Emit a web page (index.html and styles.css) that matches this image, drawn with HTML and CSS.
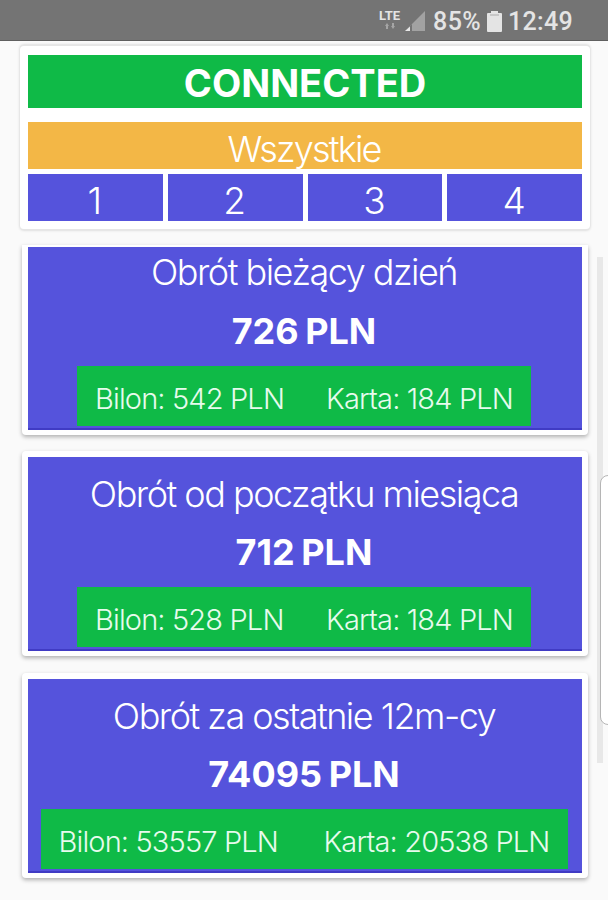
FILE: index.html
```html
<!DOCTYPE html>
<html lang="pl">
<head>
  <meta charset="UTF-8" />
  <meta name="viewport" content="width=device-width, initial-scale=1" />
  <title>Obrót</title>
  <link rel="stylesheet" href="styles.css">
</head>
<body>
  <header class="status-bar">
    <div class="lte">
      <span>LTE</span>
      <svg width="12" height="7" viewBox="0 0 12 7"><path d="M3 0 5 3H4V6H2V3H1zM9 6 7 3H8V0H10V3H11z" fill="#a5a5a5"/></svg>
    </div>
    <svg class="signal" width="21" height="20" viewBox="0 0 21 20"><path d="M20 0V20H0z" fill="#a2a2a2"/><path d="M0 20 7 13V20z" fill="#747474"/><path d="M0 20 5 15.5V20z" fill="#e8e8e8"/></svg>
    <span class="percent">85%</span>
    <svg class="battery" width="15" height="21" viewBox="0 0 15 21"><path d="M4 0H11V2H14Q15 2 15 3V20Q15 21 14 21H1Q0 21 0 20V3Q0 2 1 2H4z" fill="#e4e4e4"/><path d="M3 4H12" stroke="#aaa" stroke-width="1"/></svg>
    <span class="clock">12:49</span>
  </header>

  <main class="content">
    <section class="card machines">
      <div class="state">CONNECTED</div>
      <div class="all">Wszystkie</div>
      <div class="numbers">
        <div class="number">1</div>
        <div class="number">2</div>
        <div class="number">3</div>
        <div class="number">4</div>
      </div>
    </section>

    <section class="card turnover today">
      <div class="panel">
        <h2 class="label">Obrót bieżący dzień</h2>
        <p class="total">726 PLN</p>
        <div class="split"><span>Bilon: 542 PLN</span><span>Karta: 184 PLN</span></div>
      </div>
    </section>

    <section class="card turnover month">
      <div class="panel">
        <h2 class="label">Obrót od początku miesiąca</h2>
        <p class="total">712 PLN</p>
        <div class="split"><span>Bilon: 528 PLN</span><span>Karta: 184 PLN</span></div>
      </div>
    </section>

    <section class="card turnover year">
      <div class="panel">
        <h2 class="label">Obrót za ostatnie 12m-cy</h2>
        <p class="total">74095 PLN</p>
        <div class="split"><span>Bilon: 53557 PLN</span><span>Karta: 20538 PLN</span></div>
      </div>
    </section>
  </main>

  <div class="scrollbar"></div>
  <div class="edge-handle"></div>
</body>
</html>
```

FILE: styles.css
```css
* { box-sizing: border-box; }
body { position: relative; width: 608px; height: 900px; margin: 0; overflow: hidden; background: #fafafa; color: #fff; font-family: Inter, "Liberation Sans", sans-serif; font-weight: 300; }
h2, p { margin: 0; }

.status-bar { display: flex; justify-content: flex-end; align-items: center; height: 41px; padding: 2px 35px 0 0; background: #747474; border-bottom: 1px solid #5f5f5f; color: #e4e4e4; font-family: Roboto, sans-serif; font-size: 25px; font-weight: 500; }
.lte { display: flex; flex-direction: column; align-items: center; margin: -4px 5px 0 0; font-size: 13px; font-weight: 700; line-height: 13px; }
.lte svg { margin-top: 1px; }
.signal { margin-right: 7px; }
.percent { letter-spacing: 0.4px; }
.battery { margin: 0 6px 0 6px; }
.clock { letter-spacing: 0.3px; }

.content { padding: 4px 0 0 20px; }
.card { background: #fff; border-radius: 4px; }

.machines { width: 570px; height: 185px; padding: 9px 8px 0; border: 1px solid #e6e6e6; border-width: 1px 0; box-shadow: 0 0 3px rgba(0, 0, 0, 0.22); }
.state { height: 53px; background: #0fba47; font-size: 38px; font-weight: 700; line-height: 57px; text-align: center; }
.all { height: 47px; margin-top: 14px; padding-right: 2px; background: #f3b746; font-size: 36px; line-height: 54px; letter-spacing: -1.8px; text-align: center; }
.numbers { display: grid; grid-template-columns: repeat(4, 1fr); gap: 5px; margin-top: 5px; }
.number { height: 47px; padding-right: 1px; background: #5553dc; font-size: 37px; line-height: 53px; text-align: center; }

.turnover { width: 566px; margin: 17px 0 0 2px; padding: 6px 6px 5px; box-shadow: 0 2px 4px rgba(0, 0, 0, 0.3); }
.panel { display: flex; flex-direction: column; align-items: center; height: 194px; padding: 15px 2px 0 0; background: #5553dc; border-bottom: 2px solid #403bc4; }
.label { height: 44px; font-size: 36px; font-weight: 300; line-height: 44px; letter-spacing: -1.5px; white-space: nowrap; }
.total { height: 44px; margin-top: 14px; font-size: 36px; font-weight: 700; line-height: 44px; word-spacing: -2px; }
.split { display: flex; justify-content: space-between; width: 454px; height: 60px; margin-top: 13px; padding: 0 18px; background: #0fba47; color: #e7fbed; font-size: 29px; line-height: 65px; letter-spacing: -0.85px; white-space: nowrap; }

/* the first card is partly scrolled under the machine list */
.today { margin-top: 15px; padding-top: 2px; border-radius: 0 0 4px 4px; }
.today .panel { height: 183px; padding-top: 4px; }
.today .label { line-height: 43px; }
.month { margin-top: 16px; }
.year .split { width: 527px; }

.scrollbar { position: absolute; top: 257px; left: 597px; width: 6px; height: 506px; background: #e8e8e8; }
.edge-handle { position: absolute; top: 475px; left: 600px; width: 20px; height: 250px; background: #fff; border: 1px solid #b5b5b5; border-radius: 8px; }
```
